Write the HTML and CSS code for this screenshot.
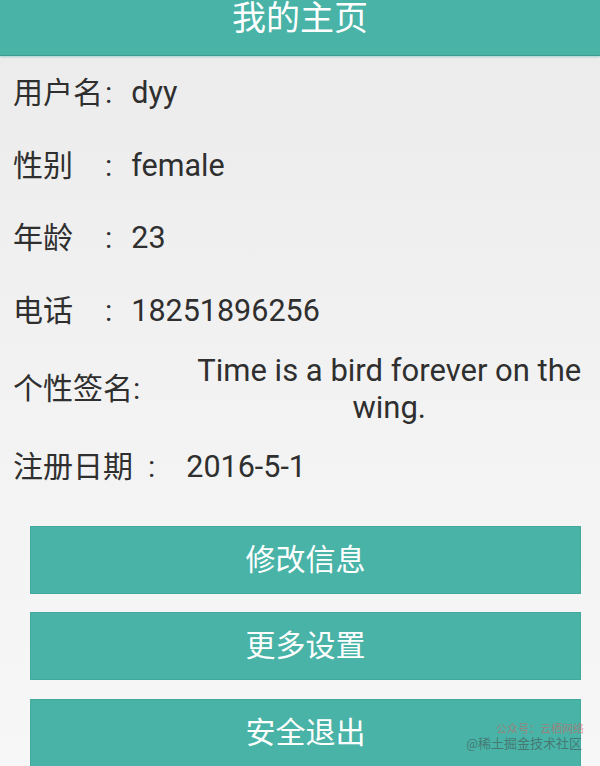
FILE: index.html
```html
<!DOCTYPE html>
<html lang="zh-CN">
<head>
<meta charset="utf-8">
<title>我的主页</title>
<link rel="stylesheet" href="styles.css">
</head>
<body>
<div class="screen">
  <header class="appbar">
    <h1 class="title">我的主页</h1>
  </header>
  <main class="profile">
    <div class="rows">
      <div class="row">
        <span class="label">用户名</span><span class="colon">:</span><span class="value">dyy</span>
      </div>
      <div class="row">
        <span class="label">性别</span><span class="colon">:</span><span class="value">female</span>
      </div>
      <div class="row">
        <span class="label">年龄</span><span class="colon">:</span><span class="value">23</span>
      </div>
      <div class="row">
        <span class="label">电话</span><span class="colon">:</span><span class="value">18251896256</span>
      </div>
      <div class="row row-tall">
        <span class="label label-wide">个性签名</span><span class="colon">:</span><span class="signature">Time is a bird forever on the wing.</span>
      </div>
      <div class="row">
        <span class="label label-wide">注册日期</span><span class="colon colon-spaced">:</span><span class="value value-date">2016-5-1</span>
      </div>
    </div>
    <div class="actions">
      <button class="btn" type="button">修改信息</button>
      <button class="btn" type="button">更多设置</button>
      <button class="btn" type="button">安全退出</button>
    </div>
  </main>
  <div class="watermark">
    <span class="wm-top">公众号：云栖网络</span>
    <span class="wm-main">@稀土掘金技术社区</span>
  </div>
</div>
</body>
</html>
```

FILE: styles.css
```css
* {
  box-sizing: border-box;
}

html, body {
  margin: 0;
  padding: 0;
}

body {
  width: 600px;
  height: 766px;
  overflow: hidden;
  font-family: Roboto, "Noto Sans CJK SC", sans-serif;
  color: #2f2f2f;
}

.screen {
  position: relative;
  width: 600px;
  height: 766px;
  background: linear-gradient(#ebebeb 0%, #f2f2f2 50%, #f7f7f7 100%);
  overflow: hidden;
}

.appbar {
  height: 55px;
  padding-top: 1px;
  background: #48b3a6;
  box-shadow: 0 1px 0 #3c9c90, 0 2px 2px rgba(72, 179, 166, 0.45);
  text-align: center;
}

.title {
  margin: 0;
  font-size: 34px;
  font-weight: 400;
  line-height: 34px;
  color: #ffffff;
}

.profile {
  padding-top: 2px;
}

.rows {
  display: flex;
  flex-direction: column;
}

.row {
  display: flex;
  align-items: center;
  height: 72.5px;
  padding-left: 13px;
  font-size: 30px;
  line-height: 36px;
}

.row-tall {
  height: 84px;
}

.label {
  flex: 0 0 92px;
  white-space: nowrap;
}

.label-wide {
  flex-basis: 120px;
}

.colon {
  flex: 0 0 auto;
}

.colon-spaced {
  margin-left: 15px;
}

.value {
  margin-left: 19px;
  font-size: 30.5px;
  white-space: nowrap;
}

.value-date {
  margin-left: 31px;
}

.signature {
  flex: 0 0 416px;
  margin-left: 41px;
  font-size: 31px;
  text-align: center;
  line-height: 37px;
}

.actions {
  display: flex;
  flex-direction: column;
  gap: 18.5px;
  margin-top: 22px;
  padding: 0 19px 0 30px;
}

.btn {
  height: 68px;
  margin: 0;
  padding: 0;
  border: 1px solid #42a99c;
  background: #48b3a6;
  color: #ffffff;
  font-family: Roboto, "Noto Sans CJK SC", sans-serif;
  font-size: 30px;
  line-height: 36px;
}

.watermark {
  position: absolute;
  right: 18px;
  bottom: 14px;
  display: flex;
  flex-direction: column;
  align-items: flex-end;
  pointer-events: none;
}

.wm-top {
  font-size: 11px;
  line-height: 12px;
  color: rgba(220, 90, 90, 0.55);
  margin-right: -2px;
}

.wm-main {
  font-size: 13px;
  line-height: 16px;
  color: rgba(70, 70, 70, 0.55);
}
```
